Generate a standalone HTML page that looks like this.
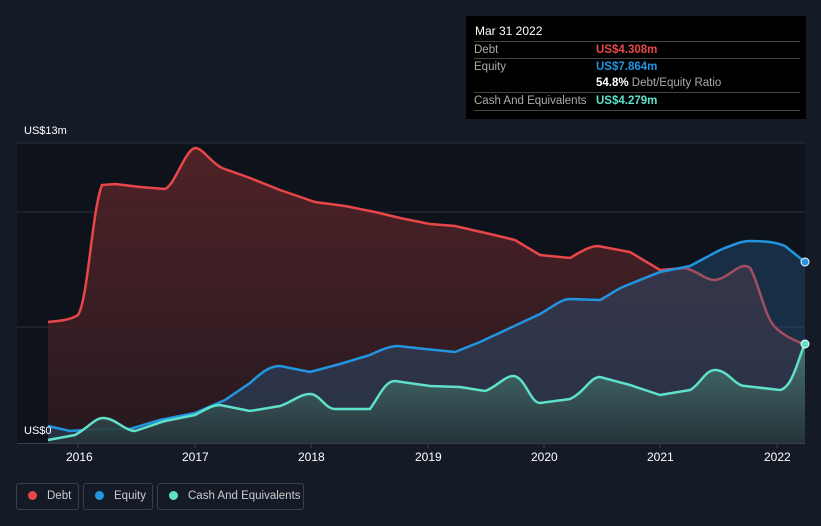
<!DOCTYPE html><html><head><style>
body{margin:0;width:821px;height:526px;background:#151b26;font-family:"Liberation Sans",sans-serif;overflow:hidden;position:relative}
.t{position:absolute;color:#fff;font-size:12px}
.tip{position:absolute;left:466px;top:16px;width:340px;height:103px;background:#000;border-radius:2px}
.row{position:absolute;left:8px;width:326px;border-top:1px solid #444;font-size:11.5px;color:#aaa;height:17px;line-height:17px}
.leg{position:absolute;top:483px;height:27px;border:1px solid #3a404a;border-radius:3px;color:#ccc;font-size:11.5px;line-height:25px;box-sizing:border-box;white-space:nowrap}
.dot{display:inline-block;width:9px;height:9px;border-radius:50%;margin:0 10px 0 11px;vertical-align:-1px}
</style></head><body>
<svg width="821" height="526" style="position:absolute;left:0;top:0">
<defs>
<linearGradient id="dg" x1="0" y1="0" x2="0" y2="1"><stop offset="0" stop-color="#5a2529"/><stop offset="1" stop-color="#2a1a20"/></linearGradient>
<linearGradient id="cg" x1="0" y1="0" x2="0" y2="1"><stop offset="0" stop-color="#4a7a78"/><stop offset="1" stop-color="#263438"/></linearGradient>
</defs>
<rect x="17" y="143" width="788" height="300" fill="#0e121a"/>
<line x1="17" y1="143" x2="805" y2="143" stroke="#2b303a"/>
<line x1="17" y1="212" x2="805" y2="212" stroke="#2b303a"/>
<line x1="17" y1="327" x2="805" y2="327" stroke="#2b303a"/>
<path d="M48,322 C60,321 70,320 78,315 C88,300 92,210 102,185 L115,184 L140,187 L165,189 C175,185 185,150 195,148 C203,148 210,162 222,168 L250,178 L280,190 L315,202 L345,206 L375,212 L400,218 L430,224 L455,226 L490,234 L515,240 L540,255 L570,258 C580,252 590,246 598,246 L630,252 L660,270 L685,268 C700,272 705,280 715,280 C730,278 740,260 750,268 C758,280 765,318 775,327 C785,337 795,340 805,345 L805,443 L48,443 Z" fill="url(#dg)" fill-opacity="0.85"/>
<path d="M48,322 C60,321 70,320 78,315 C88,300 92,210 102,185 L115,184 L140,187 L165,189 C175,185 185,150 195,148 C203,148 210,162 222,168 L250,178 L280,190 L315,202 L345,206 L375,212 L400,218 L430,224 L455,226 L490,234 L515,240 L540,255 L570,258 C580,252 590,246 598,246 L630,252 L660,270 L685,268 C700,272 705,280 715,280 C730,278 740,260 750,268 C758,280 765,318 775,327 C785,337 795,340 805,345" fill="none" stroke="#e8474a" stroke-width="2.5"/>
<path d="M48,426 L70,431 L100,429 L130,429 L160,420 L195,413 L225,400 L250,383 C262,372 270,366 280,366 L310,372 L340,364 L370,355 C380,350 390,346 398,346 L425,349 L455,352 L480,342 L510,328 L540,314 C555,305 562,299 570,299 L600,300 C610,295 615,290 625,286 L660,272 L690,266 L720,250 C735,244 742,241 750,241 C765,241 775,242 785,246 L805,262 L805,443 L48,443 Z" fill="#2a5c8a" fill-opacity="0.38"/>
<path d="M48,426 L70,431 L100,429 L130,429 L160,420 L195,413 L225,400 L250,383 C262,372 270,366 280,366 L310,372 L340,364 L370,355 C380,350 390,346 398,346 L425,349 L455,352 L480,342 L510,328 L540,314 C555,305 562,299 570,299 L600,300 C610,295 615,290 625,286 L660,272 L690,266 L720,250 C735,244 742,241 750,241 C765,241 775,242 785,246 L805,262" fill="none" stroke="#2394e0" stroke-width="2.5"/>
<path d="M48,440 L75,435 C88,428 95,418 103,418 C115,418 125,431 135,431 L165,421 L195,415 C205,410 212,405 220,405 L250,411 L280,406 C292,402 300,394 310,394 C320,394 325,409 335,409 L370,409 C380,395 385,381 395,381 L430,386 L460,387 L485,391 C495,388 505,376 513,376 C525,376 530,403 540,403 L570,399 C585,392 590,377 600,377 L630,385 L660,395 L690,390 C700,385 705,370 715,370 C728,370 735,386 745,386 L780,390 C792,388 798,360 805,343 L805,443 L48,443 Z" fill="url(#cg)" fill-opacity="0.9"/>
<path d="M48,440 L75,435 C88,428 95,418 103,418 C115,418 125,431 135,431 L165,421 L195,415 C205,410 212,405 220,405 L250,411 L280,406 C292,402 300,394 310,394 C320,394 325,409 335,409 L370,409 C380,395 385,381 395,381 L430,386 L460,387 L485,391 C495,388 505,376 513,376 C525,376 530,403 540,403 L570,399 C585,392 590,377 600,377 L630,385 L660,395 L690,390 C700,385 705,370 715,370 C728,370 735,386 745,386 L780,390 C792,388 798,360 805,343" fill="none" stroke="#5fe0c8" stroke-width="2.5"/>
<circle cx="805" cy="262" r="4" fill="#2394e0" stroke="#fff" stroke-width="1"/>
<circle cx="805" cy="344" r="4" fill="#5fe0c8" stroke="#fff" stroke-width="1"/>
<line x1="17" y1="443.5" x2="805" y2="443.5" stroke="#3a404a"/>
<g stroke="#3a404a"><line x1="78" y1="443" x2="78" y2="448"/><line x1="195" y1="443" x2="195" y2="448"/><line x1="311" y1="443" x2="311" y2="448"/><line x1="428" y1="443" x2="428" y2="448"/><line x1="544" y1="443" x2="544" y2="448"/><line x1="660" y1="443" x2="660" y2="448"/><line x1="777" y1="443" x2="777" y2="448"/></g>
</svg>
<div class="t" style="left:24px;top:125px;font-size:11px">US$13m</div>
<div class="t" style="left:24px;top:425px;font-size:11px">US$0</div>
<div class="t" style="left:66px;top:450px">2016</div>
<div class="t" style="left:182px;top:450px">2017</div>
<div class="t" style="left:298px;top:450px">2018</div>
<div class="t" style="left:415px;top:450px">2019</div>
<div class="t" style="left:531px;top:450px">2020</div>
<div class="t" style="left:647px;top:450px">2021</div>
<div class="t" style="left:764px;top:450px">2022</div>
<div class="tip">
<div style="position:absolute;left:9px;top:8px;color:#fff;font-size:12px">Mar 31 2022</div>
<div class="row" style="top:25px">Debt<span style="position:absolute;left:122px;color:#e8474a;font-weight:bold">US$4.308m</span></div>
<div class="row" style="top:42px">Equity<span style="position:absolute;left:122px;color:#2394e0;font-weight:bold">US$7.864m</span></div>
<div class="row" style="top:59px;border-top:none"><span style="position:absolute;left:122px"><b style="color:#fff">54.8%</b> Debt/Equity Ratio</span></div>
<div class="row" style="top:76px;border-bottom:1px solid #444">Cash And Equivalents<span style="position:absolute;left:122px;color:#5fe0c8;font-weight:bold">US$4.279m</span></div>
</div>
<div class="leg" style="left:16px;width:63px"><span class="dot" style="background:#e8474a;margin-left:11px"></span>Debt</div>
<div class="leg" style="left:83px;width:70px"><span class="dot" style="background:#2394e0"></span>Equity</div>
<div class="leg" style="left:157px;width:147px"><span class="dot" style="background:#5fe0c8"></span>Cash And Equivalents</div>
</body></html>
